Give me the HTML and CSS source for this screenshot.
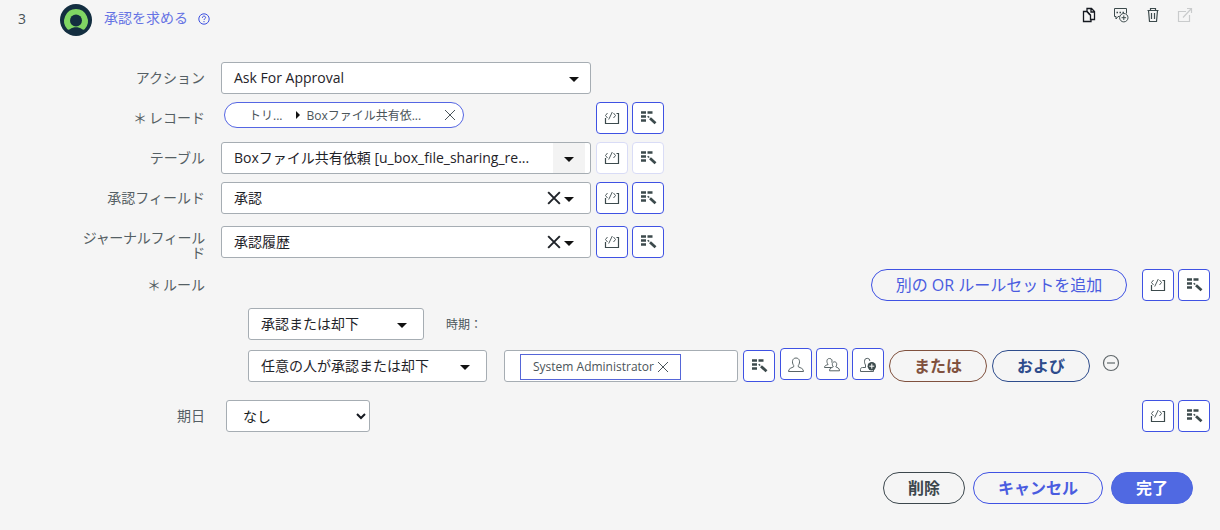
FILE: index.html
```html
<!DOCTYPE html>
<html lang="ja">
<head>
    <meta charset="UTF-8">
    <meta name="viewport" content="width=device-width, initial-scale=1.0">
    <title>承認を求める</title>
    <link rel="stylesheet" href="styles.css">
</head>
<body>
    <svg class="sprite">
        <symbol id="i-script" viewBox="0 0 16 16">
            <path d="M1.500 8v5.500h13V3.500H12.500" fill="none" stroke="currentColor" stroke-width="1.200"/>
            <path d="M3.500 3L1.500 5.500l2 2.500M9.500 3l2 2.500-2 2.500M8.300 2L4.700 9.500" fill="none" stroke="currentColor" stroke-width=".9"/>
        </symbol>
        <symbol id="i-wand" viewBox="0 0 18 16">
            <path d="M2 2.500h5M8.500 2.500h5M2 6.500h5M2 10.500h5" fill="none" stroke="currentColor" stroke-width="2.600"/>
            <path d="M11 8.300l5.500 5" fill="none" stroke="currentColor" stroke-width="2.800"/>
            <path d="M8.700 6.200l1.500 1.300" fill="none" stroke="currentColor" stroke-width="1.500"/>
        </symbol>
        <symbol id="i-x" viewBox="0 0 12 12">
            <path d="M1 1l10 10M11 1L1 11" fill="none" stroke="currentColor"/>
        </symbol>
        <symbol id="i-user" viewBox="0 0 18 16">
            <path d="M6.700 8.500C4.500 5.500 5.200 1 9 1s4.500 4.500 2.300 7.500v1.300c2.200 1.200 5.200 1.500 5.200 4.700h-15c0-3.200 3-3.500 5.200-4.700z" fill="none" stroke="currentColor"/>
        </symbol>
    </svg>

    <div class="step-header">
        <span class="step-no">3</span>
        <svg class="logo" viewBox="0 0 32 32">
            <circle cx="16" cy="16" r="16" fill="#132e40"/>
            <path d="M16 5a12 12 0 0 0-8.800 20c.8.900 1.800.8 2.700.2 3.700-2.500 8.500-2.500 12.200 0 .9.600 1.900.7 2.700-.2A12 12 0 0 0 16 5z" fill="#80d663"/>
            <circle cx="16" cy="16.500" r="6" fill="#132e40"/>
        </svg>
        <span class="step-title">承認を求める</span>
        <svg class="help" viewBox="0 0 12 12">
            <circle cx="6" cy="6" r="5.200" fill="none" stroke="currentColor"/>
            <path d="M4.400 4.800c0-2.300 3.200-2.200 3.200-.2C7.600 5.800 6 5.700 6 7M6 8v1.200" fill="none" stroke="currentColor"/>
        </svg>
        <div class="tools">
            <svg width="14" height="16" viewBox="0 0 14 16" fill="none" stroke="#151920" stroke-width="1.300">
                <path d="M5 4.500H1.500v10h7.500V12.500M5 4.500l3 3.500"/>
                <path d="M5 4.500v-3h4.500l3 3v8H8.500V8L5 4.500M9 1.500V5h3.500"/>
            </svg>
            <svg width="16" height="16" viewBox="0 0 16 16" fill="none" stroke="#3c4a4c">
                <path d="M6.500 9.500H5L3 12V9.500H1.500v-8h12v5"/>
                <path d="M3.500 5.500H5M6.500 5.500H8M9.500 5.500H11" stroke-width="1.500"/>
                <circle cx="10.800" cy="10.700" r="4.200"/>
                <path d="M8.500 10.700h4.600M10.800 8.400V13"/>
            </svg>
            <svg width="14" height="16" viewBox="0 0 14 16" fill="none" stroke="#3c4a4c" stroke-width="1.200">
                <path d="M1.500 3.500h11M4.500 3.500v-2h5v2M2.500 3.500l1 11h7l1-11M5.500 6v6M8.500 6v6"/>
            </svg>
            <svg width="16" height="16" viewBox="0 0 16 16" fill="none" stroke="#c9cbcc" stroke-width="1.200">
                <path d="M9 4.500H1.500v10h11V8M6 10.500L14 2M10 1.500h4.500V6"/>
            </svg>
        </div>
    </div>

    <div class="form">
        <div class="row">
            <label>アクション</label>
            <div class="field">Ask For Approval<span class="caret"></span></div>
        </div>

        <div class="row">
            <label><span class="required">＊</span>レコード</label>
            <div class="pill-area">
                <div class="pill">
                    <span>トリ...</span>
                    <i class="arrow-right"></i>
                    <span>Boxファイル共有依...</span>
                    <svg class="pill-x"><use href="#i-x"/></svg>
                </div>
            </div>
            <button class="icon-btn"><svg><use href="#i-script"/></svg></button>
            <button class="icon-btn wand"><svg><use href="#i-wand"/></svg></button>
        </div>

        <div class="row">
            <label>テーブル</label>
            <div class="field split">Boxファイル共有依頼 [u_box_file_sharing_re...<span class="caret-box"><span class="caret"></span></span></div>
            <button class="icon-btn off"><svg><use href="#i-script"/></svg></button>
            <button class="icon-btn wand off"><svg><use href="#i-wand"/></svg></button>
        </div>

        <div class="row">
            <label>承認フィールド</label>
            <div class="field clearable">承認<svg class="clear"><use href="#i-x"/></svg><span class="caret"></span></div>
            <button class="icon-btn"><svg><use href="#i-script"/></svg></button>
            <button class="icon-btn wand"><svg><use href="#i-wand"/></svg></button>
        </div>

        <div class="row tall">
            <label>ジャーナルフィールド</label>
            <div class="field clearable">承認履歴<svg class="clear"><use href="#i-x"/></svg><span class="caret"></span></div>
            <button class="icon-btn"><svg><use href="#i-script"/></svg></button>
            <button class="icon-btn wand"><svg><use href="#i-wand"/></svg></button>
        </div>

        <div class="row rules">
            <label><span class="required">＊</span>ルール</label>
            <button class="btn add-rule">別の OR ルールセットを追加</button>
            <button class="icon-btn"><svg><use href="#i-script"/></svg></button>
            <button class="icon-btn wand"><svg><use href="#i-wand"/></svg></button>
        </div>

        <div class="rule-line">
            <div class="field rule-type">承認または却下<span class="caret"></span></div>
            <span class="when">時期：</span>
        </div>

        <div class="rule-line second">
            <div class="field rule-who">任意の人が承認または却下<span class="caret"></span></div>
            <div class="field people">
                <span class="tag">System Administrator<svg class="tag-x"><use href="#i-x"/></svg></span>
            </div>
            <button class="icon-btn wand"><svg><use href="#i-wand"/></svg></button>
            <button class="icon-btn person"><svg><use href="#i-user"/></svg></button>
            <button class="icon-btn person">
                <svg viewBox="0 0 18 16" fill="none" stroke="currentColor">
                    <path d="M8.500 10.500H1.500c0-2.200 1.800-2.200 3.600-3C3.300 5.300 3.500 1.500 6.300 1.500s3.200 2 2.400 4"/>
                    <path d="M10.300 9.800c-1.800-2.300-1-5 1.200-5s3 2.700 1.300 5c1.500.9 3.700 1 3.700 4H6.500c0-3 2.300-3.100 3.800-4z"/>
                </svg>
            </button>
            <button class="icon-btn person">
                <svg viewBox="0 0 18 16" fill="none" stroke="currentColor">
                    <path d="M6.500 10.500V8C5.500 6.500 5.500 5 5.500 4a2.700 2.700 0 0 1 5.400 0M6.500 10.500h-3c-1.500 0-2 1-2 2v2h13V13"/>
                    <circle cx="12.800" cy="9.200" r="4.200" fill="#3c4a4c" stroke="none"/>
                    <path d="M10.300 9.200h5M12.800 6.700v5" stroke="#fff"/>
                </svg>
            </button>
            <button class="btn or">または</button>
            <button class="btn and">および</button>
            <svg class="minus" viewBox="0 0 18 18"><circle cx="9" cy="9" r="7.500"/><path d="M5 9h8"/></svg>
        </div>

        <div class="row due">
            <label>期日</label>
            <select>
                <option>なし</option>
            </select>
            <button class="icon-btn push"><svg><use href="#i-script"/></svg></button>
            <button class="icon-btn wand"><svg><use href="#i-wand"/></svg></button>
        </div>
    </div>

    <div class="footer">
        <button class="btn delete">削除</button>
        <button class="btn cancel">キャンセル</button>
        <button class="btn done">完了</button>
    </div>
</body>
</html>
```
FILE: styles.css
```css
* {
    box-sizing: border-box;
    font-family: "Open Sans", "Noto Sans CJK JP", sans-serif;
}
body {
    margin: 0;
    background-color: #f5f5f5;
    color: #1f2329;
    font-size: 14px;
    overflow: hidden;
}
svg {
    display: block;
    flex: none;
}
.sprite {
    display: none;
}
button {
    margin: 0;
    padding: 0;
    flex: none;
}

/* header */
.step-header {
    display: flex;
    align-items: center;
    height: 36px;
    padding: 0 28px 0 18px;
}
.step-no {
    width: 42px;
    color: #485256;
}
.logo {
    width: 32px;
    height: 32px;
    margin: 4px 12px 0 0;
}
.step-title {
    margin-top: -2px;
    color: #6573e4;
}
.help {
    width: 12px;
    height: 12px;
    margin: 1px 0 0 10px;
    color: #3b4fe0;
}
.tools {
    display: flex;
    gap: 17px;
    margin: -7px -1px 0 auto;
}

/* form rows */
.form {
    padding: 26px 10px 0 0;
}
.row {
    display: flex;
    align-items: center;
    height: 32px;
    margin-bottom: 8px;
}
.row label {
    width: 127px;
    margin: 0 16px 0 78px;
    padding-bottom: 2px;
    flex: none;
    text-align: right;
    line-height: 15px;
    word-break: break-all;
    line-break: anywhere;
    color: #555f64;
}
.row.tall {
    height: 40px;
    margin-bottom: 7px;
}
.row.tall label {
    padding: 6px 0 0;
    letter-spacing: -0.3px;
}
.required {
    margin-right: 2px;
}
.field {
    display: flex;
    align-items: center;
    flex: none;
    width: 370px;
    height: 32px;
    padding: 0 11px 2px 12px;
    border: 1px solid #a6adb3;
    border-radius: 3px;
    background: #fff;
    white-space: nowrap;
}
.caret {
    margin: 4px 0 0 auto;
    border: 5px solid transparent;
    border-top-color: #111;
    border-bottom: 0;
}
.split {
    padding-right: 5px;
}
.caret-box {
    display: flex;
    align-items: center;
    justify-content: center;
    width: 32px;
    height: 30px;
    margin: 2px 0 0 auto;
    background: #f3f3f3;
}
.caret-box .caret {
    margin: 3px 0 0;
}
.clearable {
    padding-right: 16px;
}
.clear {
    width: 14px;
    height: 14px;
    margin: 2px 0 0 auto;
    stroke-width: 1.7;
}
.clearable .caret {
    margin-left: 3px;
}

.icon-btn {
    display: flex;
    align-items: center;
    justify-content: center;
    width: 32px;
    height: 32px;
    margin-left: 4px;
    border: 1px solid #3f52e3;
    border-radius: 4px;
    background: #fff;
    color: #3c4a4c;
}
.icon-btn svg {
    width: 16px;
    height: 16px;
}
.icon-btn.wand svg {
    width: 18px;
    margin-top: -1px;
}
.icon-btn.off {
    border-color: #d9dcf6;
}
.field + .icon-btn,
.pill-area + .icon-btn {
    margin-left: 5px;
}

/* data pill */
.pill-area {
    width: 370px;
    height: 32px;
    padding-left: 3px;
}
.pill {
    display: flex;
    align-items: center;
    width: 240px;
    height: 26px;
    padding: 0 7px 0 24px;
    border: 1px solid #5566e3;
    border-radius: 13px;
    background: #fff;
    color: #4b555a;
    font-size: 12px;
    white-space: nowrap;
}
.arrow-right {
    margin: 0 6px 0 14px;
    border: 4px solid transparent;
    border-left-color: #111;
    border-right: 0;
}
.pill-x {
    width: 12px;
    height: 12px;
    margin-left: auto;
}

/* rules */
.btn {
    height: 32px;
    border: 1px solid #3f52e3;
    border-radius: 16px;
    background: transparent;
    color: #4a5ce0;
    font-size: 16px;
    line-height: 24px;
}
.row.rules {
    margin-bottom: 7px;
}
.add-rule {
    width: 256px;
    margin: 0 11px 0 auto;
}
.rule-line {
    display: flex;
    align-items: center;
    height: 32px;
    margin: 0 0 10px 248px;
}
.rule-type {
    width: 176px;
    padding-right: 16px;
}
.when {
    margin-left: 22px;
    color: #4b555a;
    font-size: 12px;
}
.rule-who {
    width: 239px;
    padding-right: 16px;
}
.people {
    width: 234px;
    margin-left: 17px;
    padding: 0 0 0 15px;
}
.tag {
    display: flex;
    align-items: center;
    width: 161px;
    height: 26px;
    margin-top: 1px;
    padding-left: 12px;
    border: 1px solid #5566d8;
    color: #4b555a;
    font-size: 12px;
}
.tag-x {
    width: 12px;
    height: 12px;
    margin-left: 3px;
}
.person {
    margin: -4px 0 0 4px;
    color: #596466;
}
.icon-btn.person:nth-of-type(2) {
    margin-left: 5px;
}
.icon-btn.person svg {
    width: 18px;
    margin-top: 2px;
}
.or,
.and {
    width: 98px;
    margin-left: 5px;
    font-weight: 600;
}
.or {
    border-color: #80513e;
    color: #80513e;
}
.and {
    border-color: #2e4c8c;
    color: #2e4c8c;
}
.minus {
    width: 18px;
    height: 18px;
    margin: -6px 0 0 12px;
    fill: none;
    stroke: #61686b;
    stroke-width: 1.2;
}
.rule-line.second {
    margin-bottom: 18px;
}

/* due date */
.row.due {
    margin-bottom: 40px;
}
.due select {
    width: 144px;
    height: 32px;
    margin-left: 5px;
    padding: 0 0 0 12px;
    border: 1px solid #a6adb3;
    border-radius: 3px;
    background: #fff;
    color: #151920;
    font-size: 14px;
}
.push {
    margin-left: auto;
}

.footer {
    display: flex;
    justify-content: flex-end;
    gap: 8px;
    padding-right: 27px;
}
.footer .btn {
    width: 82px;
    font-weight: 600;
}
.footer .cancel {
    width: 130px;
}
.footer .delete {
    border-color: #3c474d;
    color: #3c474d;
}
.footer .done {
    border-color: #4f67e0;
    background: #5069e2;
    color: #fff;
}
```
